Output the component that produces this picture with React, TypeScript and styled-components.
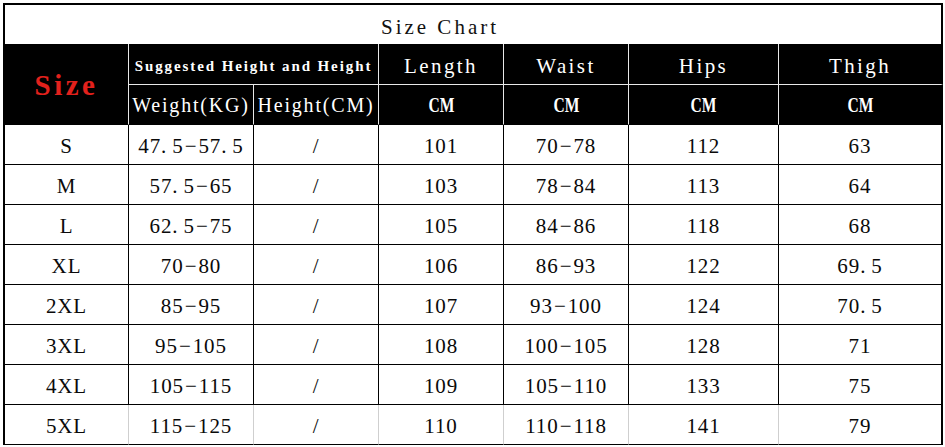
import React from "react";
import styled, { createGlobalStyle, css } from "styled-components";

const serif = `"Liberation Serif", "Noto Sans CJK SC", serif`;

const GlobalStyle = createGlobalStyle`
    html, body {
        margin: 0;
        padding: 0;
        background: #fff;
    }
`;

const Page = styled.div`
    width: 945px;
    height: 447px;
    padding: 3px 0 0 3px;
    box-sizing: border-box;
    overflow: hidden;
    background: #fff;
`;

const Chart = styled.div`
    display: grid;
    grid-template-columns: 124px 125px 125px 125px 125px 150px 164px;
    grid-template-rows: 39px 41px 40px repeat(8, 40px);
    width: 940px;
    box-sizing: border-box;
    border-left: 2px solid #000;
    border-top: 2px solid #000;
`;

const Cell = styled.div`
    display: flex;
    align-items: center;
    justify-content: center;
    box-sizing: border-box;
    white-space: nowrap;
    font-family: ${serif};
    line-height: 24px;
`;

const TitleCell = styled(Cell)`
    grid-column: 1 / -1;
    padding: 4px 66px 0 0;
    border-right: 2px solid #000;
    font-size: 21px;
    letter-spacing: 3px;
    color: #111;
`;

interface HeadProps {
    $rows?: number;
    $cols?: number;
    $size?: number;
    $spacing?: number;
    $bold?: boolean;
    $last?: boolean;
    $lower?: boolean;
}

const HeadCell = styled(Cell)<HeadProps>`
    background: #000;
    color: #fff;
    padding-top: ${(p) => (p.$lower ? 1 : 4)}px;
    font-size: ${(p) => p.$size ?? 21}px;
    letter-spacing: ${(p) => p.$spacing ?? 2.4}px;
    font-weight: ${(p) => (p.$bold ? "bold" : "normal")};
    border-right: 1px solid #e8e8e8;
    border-bottom: 1px solid ${(p) => (p.$lower ? "#000" : "#e8e8e8")};
    ${(p) => p.$rows && css`grid-row: span ${p.$rows};`}
    ${(p) => p.$cols && css`grid-column: span ${p.$cols};`}
    ${(p) => p.$last && css`border-right: 2px solid #000;`}
`;

// the "CM" unit is set in a condensed bold face
const Unit = styled.span`
    display: inline-block;
    transform: scaleX(0.74);
    letter-spacing: 0;
`;

const SizeLabel = styled(HeadCell)`
    color: #e2211c;
    font-size: 29px;
    letter-spacing: 3.5px;
    font-weight: bold;
    padding-top: 2px;
    border-bottom-color: #000;
`;

const DataCell = styled(Cell)<{ $last?: boolean; $final?: boolean }>`
    font-size: 21px;
    letter-spacing: 0.9px;
    color: #0a0a0a;
    padding-top: 2px;
    border-right: 1px solid ${(p) => (p.$final ? "#cfcfcf" : "#000")};
    border-bottom: 1px solid #000;
    ${(p) => p.$last && css`border-right: 2px solid #000;`}
`;

// wide decimal point, as in the printed chart
const Point = styled.span`
    margin-right: 5px;
`;

const Dash = styled.span`
    margin: 0 1px;
`;

const rows: string[][] = [
    ["S", "47.5−57.5", "/", "101", "70−78", "112", "63"],
    ["M", "57.5−65", "/", "103", "78−84", "113", "64"],
    ["L", "62.5−75", "/", "105", "84−86", "118", "68"],
    ["XL", "70−80", "/", "106", "86−93", "122", "69.5"],
    ["2XL", "85−95", "/", "107", "93−100", "124", "70.5"],
    ["3XL", "95−105", "/", "108", "100−105", "128", "71"],
    ["4XL", "105−115", "/", "109", "105−110", "133", "75"],
    ["5XL", "115−125", "/", "110", "110−118", "141", "79"],
];

const renderValue = (value: string) =>
    value.split(/([.−])/).map((part, i) => {
        if (part === ".") return <Point key={i}>{part}</Point>;
        if (part === "−") return <Dash key={i}>{part}</Dash>;
        return part;
    });

const App = () => {
    return (
        <Page>
            <GlobalStyle />
            <Chart>
                <TitleCell>Size Chart</TitleCell>

                <SizeLabel $rows={2}>Size</SizeLabel>
                <HeadCell $cols={2} $size={15} $spacing={1.9} $bold>Suggested Height and Height</HeadCell>
                <HeadCell>Length</HeadCell>
                <HeadCell>Waist</HeadCell>
                <HeadCell>Hips</HeadCell>
                <HeadCell $last>Thigh</HeadCell>

                <HeadCell $size={20} $spacing={1.8} $lower>Weight(KG)</HeadCell>
                <HeadCell $size={20} $spacing={1.8} $lower>Height(CM)</HeadCell>
                <HeadCell $size={21} $bold $lower><Unit>CM</Unit></HeadCell>
                <HeadCell $size={21} $bold $lower><Unit>CM</Unit></HeadCell>
                <HeadCell $size={21} $bold $lower><Unit>CM</Unit></HeadCell>
                <HeadCell $size={21} $bold $lower $last><Unit>CM</Unit></HeadCell>

                {rows.map((row, r) =>
                    row.map((value, c) => (
                        <DataCell
                            key={`${r}-${c}`}
                            $last={c === row.length - 1}
                            $final={r === rows.length - 1}
                        >
                            {renderValue(value)}
                        </DataCell>
                    ))
                )}
            </Chart>
        </Page>
    );
};

export default App;
